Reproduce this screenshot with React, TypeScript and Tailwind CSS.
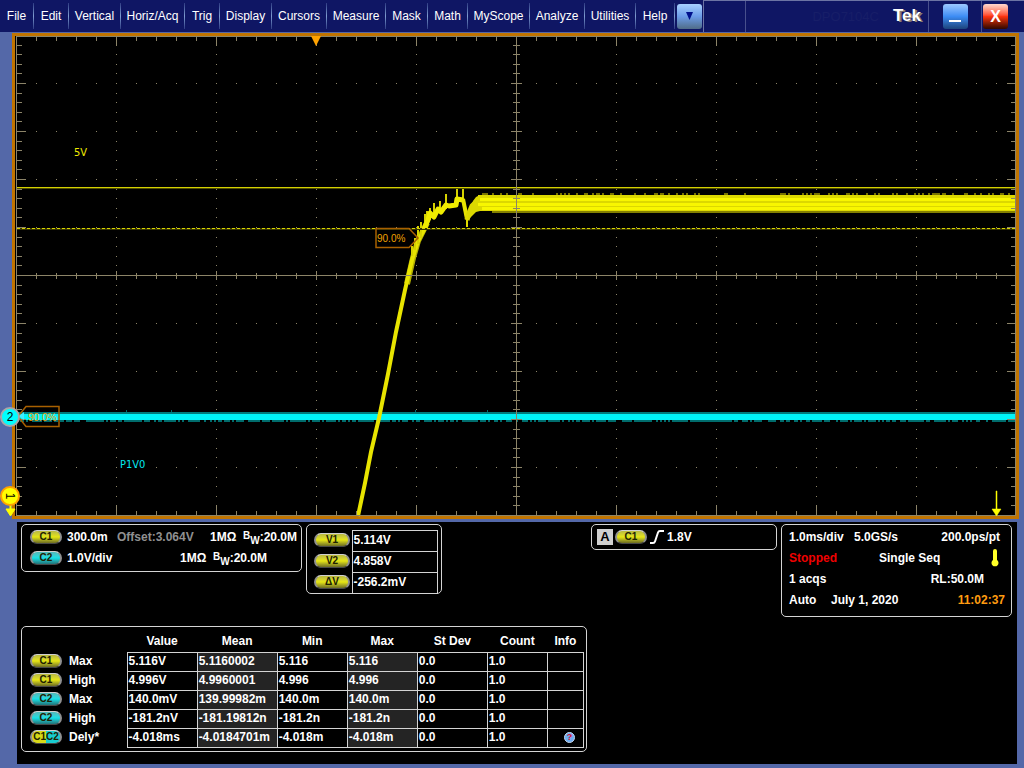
import React from 'react';

type Tone = 'c1' | 'c2' | 'both';

const menus = [
  { label: 'File', width: 'w-[33px]' },
  { label: 'Edit', width: 'w-[34px]' },
  { label: 'Vertical', width: 'w-[51px]' },
  { label: 'Horiz/Acq', width: 'w-[63px]' },
  { label: 'Trig', width: 'w-[34px]' },
  { label: 'Display', width: 'w-[51px]' },
  { label: 'Cursors', width: 'w-[54px]' },
  { label: 'Measure', width: 'w-[58px]' },
  { label: 'Mask', width: 'w-[41px]' },
  { label: 'Math', width: 'w-[39px]' },
  { label: 'MyScope', width: 'w-[61px]' },
  { label: 'Analyze', width: 'w-[54px]' },
  { label: 'Utilities', width: 'w-[50px]' },
  { label: 'Help', width: 'w-[38px]' },
];

const cursors = [
  { name: 'V1', value: '5.114V' },
  { name: 'V2', value: '4.858V' },
  { name: 'ΔV', value: '-256.2mV' },
];

const columns = ['Value', 'Mean', 'Min', 'Max', 'St Dev', 'Count', 'Info'];

const measurements: { source: string; tone: Tone; name: string; cells: string[] }[] = [
  { source: 'C1', tone: 'c1', name: 'Max', cells: ['5.116V', '5.1160002', '5.116', '5.116', '0.0', '1.0'] },
  { source: 'C1', tone: 'c1', name: 'High', cells: ['4.996V', '4.9960001', '4.996', '4.996', '0.0', '1.0'] },
  { source: 'C2', tone: 'c2', name: 'Max', cells: ['140.0mV', '139.99982m', '140.0m', '140.0m', '0.0', '1.0'] },
  { source: 'C2', tone: 'c2', name: 'High', cells: ['-181.2nV', '-181.19812n', '-181.2n', '-181.2n', '0.0', '1.0'] },
  { source: 'C1C2', tone: 'both', name: 'Dely*', cells: ['-4.018ms', '-4.0184701m', '-4.018m', '-4.018m', '0.0', '1.0'] },
];

const toneClass: Record<Tone, string> = {
  c1: 'bg-linear-to-b from-[#b8b840] via-[#e6e610] to-[#6e6e20]',
  c2: 'bg-linear-to-b from-[#50b8b8] via-[#10e0e6] to-[#207478]',
  both: 'bg-linear-to-r from-[#d8d818] from-50% to-[#18ccd0] to-50%',
};

const Pill: React.FC<{ label: string; tone?: Tone; wide?: boolean }> = ({ label, tone = 'c1', wide }) => (
  <span
    className={`${toneClass[tone]} ${wide ? 'w-9' : 'w-8'} inline-flex h-[14px] shrink-0 items-center justify-center rounded-full border border-x-2 border-t-[#d0d0d0] border-x-[#909090] border-b-[#484848] text-[10px] leading-none font-bold text-[#202000]`}
  >
    {label}
  </span>
);

// Graticule: 10 x 10 divisions of 100 x 48 units, five minor steps each
const LEFT = 16;
const TOP = 36;
const xs = Array.from({ length: 49 }, (_, i) => ({ pos: LEFT + (i + 1) * 20, major: (i + 1) % 5 === 0 }));
const ys = Array.from({ length: 49 }, (_, i) => ({ pos: Math.round(TOP + (i + 1) * 9.6), major: (i + 1) % 5 === 0 }));

const ticks = [
  ...xs.map(({ pos, major }) => {
    const n = major ? 10 : 5;
    return `M${pos} 36h1v${n}h-1zM${pos} ${516 - n}h1v${n}h-1zM${pos} ${major ? 271 : 273}h1v${major ? 9 : 6}h-1z`;
  }),
  ...ys.map(({ pos, major }) => {
    const n = major ? 9 : 5;
    return `M17 ${pos - 1}h${n}v1h-${n}zM${1016 - n} ${pos - 1}h${n}v1h-${n}zM${major ? 511 : 513} ${pos - 1}h${major ? 11 : 7}v1h-${major ? 11 : 7}z`;
  }),
].join('');

const dots = [
  ...xs.flatMap(x => ys.filter(y => y.major).map(y => `M${x.pos} ${y.pos - 1}h1v1h-1z`)),
  ...ys.flatMap(y => xs.filter(x => x.major).map(x => `M${x.pos} ${y.pos - 1}h1v1h-1z`)),
].join('');

// Sparse specks along the edge of a trace
const specks = (from: number, y: number, seed: number, density: number) => {
  let s = seed;
  let d = '';
  for (let x = from; x < 1015; x += 2) {
    s = (s * 16807) % 2147483647;
    if (s % 100 < density) d += `M${x} ${y}h2v2h-2z`;
  }
  return d;
};

const Graticule: React.FC = () => (
  <svg
    viewBox="15 36 1001 480"
    className="block h-auto w-full overflow-visible font-['Liberation_Sans',Arial,sans-serif]"
    role="img"
    aria-label="Waveform display"
  >
    <rect x="15" y="36" width="1001" height="480" fill="#000" />
    <path d={dots} fill="#8c8468" />

    {/* Channel 2 */}
    <rect x="17" y="412" width="999" height="3" fill="#007c7c" />
    <path d={specks(20, 420, 77, 72)} fill="#006c6c" />
    <path d="M126 410h1v2h-1zM171 410h1v2h-1zM415 410h1v2h-1zM487 410h1v2h-1z" fill="#006c6c" />
    <rect x="17" y="414" width="999" height="6" fill="#00f4f8" />

    {/* Channel 1 */}
    <path d="M407 284 L413 258 L418 241 L427 223" fill="none" stroke="#b4b000" strokeWidth="6" />
    <path d="M358 516 L365 483 L371 452 L379 418 L388 374 L396 332 L405 290 L412 260 L418 241 L426 226" fill="none" stroke="#e8e400" strokeWidth="4" />
    <path d="M412 256V246 M415 250V238 M418 244V226 M421 238V222 M425 230V214 M427 226V211 M430 220V208 M434 214V203 M440 212V201 M446 209V194 M457 205V188 M463 203V189" stroke="#d6d200" strokeWidth="2" />
    <path d="M424 229 L428 220 L430 213 L434 217 L438 209 L441 212 L446 205 L449 206 L456 205 L457 199 L463 200" fill="none" stroke="#f0ec00" strokeWidth="5" strokeLinejoin="round" />
    <path d="M463 199 L467 219" fill="none" stroke="#e8e400" strokeWidth="4" />
    <path d="M467 220 L469 213 L472 206 L476 202 L480 201" fill="none" stroke="#dcd800" strokeWidth="5" />
    <path d="M473 201 L476 197 L480 195 V211 L476 212 L472 216 L469 219z" fill="#dcd800" />
    <path d="M467 214V227" stroke="#e0dc00" strokeWidth="2" />
    <path d={specks(478, 193, 19, 30)} fill="#787400" />
    <path d="M478 195H1016V211H478z" fill="#dcd800" />
    <path d="M480 198h536v3h-536zM478 203h538v3h-538zM482 207h534v3h-534z" fill="#f8f600" />
    <path d="M492 211h524v2h-524z" fill="#848000" />

    {/* Voltage cursors */}
    <path d="M17 188h999v1h-999z" fill="#504e00" />
    <path d="M17 187h999v1h-999z" fill="#d4d000" />
    <path d="M17 228h999v2h-999z" fill="#383600" />
    <path d="M17 228.500H1016" stroke="#d8d400" strokeDasharray="3 2" />

    <path d={ticks} fill="#8c8468" />
    <path d="M16 36h1v480h-1zM1015 36h1v480h-1zM16 36h1000v1h-1000zM16 515h1000v1h-1000z" fill="#8c8468" />
    <path d="M516 36h1v480h-1zM16 275h1000v1h-1000z" fill="#8c8468" />

    <path d="M311 36h10l-5 10z" fill="#ffa200" />
    <path d="M996 491h1v18h4l-4.500 7-4.500-7h4z" fill="#ff0" stroke="#ff0" strokeWidth=".5" />

    {/* Reference level tags */}
    <g fill="none" stroke="#a86000" strokeWidth="1.500">
      <path d="M376 228.500H409L418 238L409 247.500H376z" />
      <path d="M59 406.500H26L18 416.500L26 426.500H59z" />
    </g>
    <path d="M19 416l5-4v8z" fill="#4ef" />
    <g fill="#f0a000" fontSize="10">
      <text x="377" y="242">90.0%</text>
      <text x="28" y="421">90.0%</text>
    </g>

    <g fontSize="11" fontFamily="DejaVu Sans Condensed, sans-serif">
      <text x="74" y="156" fill="#f0ec00">5V</text>
      <text x="120" y="468" fill="#00e8f0">P1V0</text>
    </g>

    {/* Channel handles */}
    <circle cx="10" cy="417" r="9" fill="#0ff" stroke="#a8a8a8" strokeWidth="2" />
    <text x="10" y="421" fontSize="12" textAnchor="middle" fill="#000">2</text>
    <path d="M10 505h1v4h4l-4.500 7-4.500-7h4z" fill="#ff0" stroke="#ff0" />
    <circle cx="10" cy="496" r="9" fill="#ff0" stroke="#ffa200" strokeWidth="2" />
    <text x="10" y="500" fontSize="12" textAnchor="middle" fill="#000" transform="rotate(90 10 496)">1</text>
  </svg>
);

const Bandwidth: React.FC = () => (
  <span>
    1MΩ&nbsp; <span className="relative bottom-[2px] text-[10px]">B</span>
    <span className="relative top-[3px] text-[10px]">W</span>:20.0M
  </span>
);

const Divider: React.FC = () => (
  <span className="h-[26px] w-px shrink-0 bg-linear-to-b from-[#303c84] via-[#7f9cd0] to-[#303c84]" />
);

const panel = 'shrink-0 rounded-[5px] border border-[#d4d4d4]';

const App: React.FC = () => {
  return (
    <div className="flex min-h-screen flex-col bg-[#5468a8] font-['Liberation_Sans',Arial,sans-serif] text-xs text-white">
      <header className="flex h-8 items-center bg-[#0f1664]">
        <nav className="flex items-center">
          {menus.map(m => (
            <React.Fragment key={m.label}>
              <button className={`${m.width} h-[26px] shrink-0 text-center whitespace-nowrap`}>{m.label}</button>
              <Divider />
            </React.Fragment>
          ))}
          <button
            aria-label="More menus"
            className="mr-px ml-[2px] flex h-[25px] w-[25px] items-center justify-center rounded-[3px] bg-linear-to-b from-[#a8d0ff] via-[#6c9ce8] to-[#506c88]"
          >
            <svg width="7" height="8" viewBox="0 0 7 8"><path d="M0 0h7L3.500 8z" fill="#00108c" /></svg>
          </button>
        </nav>
        <div className="flex h-8 flex-1 items-center border-t border-l border-[#6c74a4] pr-4">
          <div className="h-full w-[42px] border-r border-[#48508c]" />
          <div className="flex h-full flex-1 items-center justify-end gap-[14px] border-r border-[#48508c] pr-[7px]">
            <span className="text-[13px] text-[#171e68]">DPO7104C</span>
            <span className="text-[17px] font-bold [text-shadow:2px_1px_0_#887c70]">Tek</span>
          </div>
          <div className="flex h-full w-[53px] items-center justify-center border-r border-[#48508c]">
            <button
              aria-label="Minimize"
              className="flex h-[25px] w-[25px] items-end justify-center rounded-[3px] bg-linear-to-b from-[#9cc8ff] via-[#3c8cf4] to-[#1c447c] pb-[7px]"
            >
              <span className="h-[2px] w-3 bg-white" />
            </button>
          </div>
          <button
            aria-label="Close"
            className="ml-px flex h-[25px] w-[25px] items-center justify-center rounded-[3px] bg-linear-to-b from-[#ffd8d0] via-[#fc3410] to-[#300800] text-base font-bold"
          >
            X
          </button>
        </div>
      </header>

      <section className="mt-px mr-[5px] ml-3 border-[3px] border-[#c07400]">
        <Graticule />
      </section>

      <main className="mt-[3px] mr-[7px] mb-1 ml-[17px] flex-1 bg-black pt-[2px] pr-[5px] pb-3 pl-1 font-bold">
        <div className="flex items-start gap-1">
          <section className={`${panel} w-[281px] pt-px pr-1 pb-[3px] pl-2`}>
            <div className="flex h-[21px] items-center">
              <Pill label="C1" />
              <span className="ml-[5px] w-[50px]">300.0m</span>
              <span className="text-[#909090]">Offset:3.064V</span>
              <span className="ml-auto"><Bandwidth /></span>
            </div>
            <div className="flex h-[21px] items-center pr-[30px]">
              <Pill label="C2" tone="c2" />
              <span className="ml-[5px]">1.0V/div</span>
              <span className="ml-auto"><Bandwidth /></span>
            </div>
          </section>

          <section className={`${panel} h-[70px] w-[136px] pt-[5px] pl-[7px]`}>
            <table className="w-[124px] table-fixed border-collapse">
              <tbody>
                {cursors.map(c => (
                  <tr key={c.name} className="h-[21px]">
                    <th scope="row" className="w-[38px] p-0 pb-[2px] text-left align-middle">
                      <span className="flex"><Pill label={c.name} wide /></span>
                    </th>
                    <td className="border border-b-0 border-[#d4d4d4] p-0 pb-[3px] pl-px leading-4">{c.value}</td>
                  </tr>
                ))}
              </tbody>
            </table>
          </section>

          <section className={`${panel} ml-auto flex h-[26px] w-[186px] items-center pl-[5px]`}>
            <span className="mr-[2px] flex h-4 w-4 items-center justify-center bg-[#d0d0d0] text-[13px] text-black">A</span>
            <Pill label="C1" />
            <svg width="16" height="14" viewBox="0 0 16 14" className="mx-[2px]">
              <path d="M1 13h3q1.500 0 2-1.500L9 2.500Q9.500 1 11 1h4" fill="none" stroke="#fff" strokeWidth="2" />
            </svg>
            <span>1.8V</span>
          </section>

          <section className={`${panel} flex h-[93px] w-[231px] flex-col pt-px pr-[6px] pl-[7px]`}>
            <div className="flex h-[21px] items-center pr-[5px]">
              <span className="w-[65px]">1.0ms/div</span>
              <span>5.0GS/s</span>
              <span className="ml-auto">200.0ps/pt</span>
            </div>
            <div className="flex h-[21px] items-center pr-[6px]">
              <span className="w-[90px] text-[#f00000]">Stopped</span>
              <span>Single Seq</span>
              <svg width="8" height="18" viewBox="0 0 8 18" className="ml-auto">
                <path d="M2 2a2 2 0 0 1 4 0v9a3.500 3.500 0 1 1-4 0z" fill="#ffff28" />
              </svg>
            </div>
            <div className="flex h-[21px] items-center justify-between pr-[21px]">
              <span>1 acqs</span>
              <span>RL:50.0M</span>
            </div>
            <div className="flex h-[21px] items-center">
              <span className="w-[42px]">Auto</span>
              <span>July 1, 2020</span>
              <span className="ml-auto text-[#ff9c10]">11:02:37</span>
            </div>
          </section>
        </div>

        <section className={`${panel} mt-[9px] w-[566px] pb-[3px]`}>
          <table className="w-[562px] table-fixed border-collapse">
            <colgroup>
              <col className="w-[47px]" />
              <col className="w-[58px]" />
              <col className="w-[70px]" />
              <col className="w-[80px]" />
              <col className="w-[70px]" />
              <col className="w-[70px]" />
              <col className="w-[70px]" />
              <col className="w-[60px]" />
              <col className="w-[36px]" />
            </colgroup>
            <thead>
              <tr className="h-[25px]">
                <td colSpan={2} />
                {columns.map(c => (
                  <th key={c} scope="col" className="p-0 pt-[3px] text-center">{c}</th>
                ))}
              </tr>
            </thead>
            <tbody>
              {measurements.map(m => (
                <tr key={m.source + m.name} className="h-[19px]">
                  <td className="p-0 pb-[2px] pl-2 align-middle">
                    <span className="flex"><Pill label={m.source} tone={m.tone} /></span>
                  </td>
                  <th scope="row" className="p-0 pb-[2px] text-left leading-4">{m.name}</th>
                  {m.cells.map((v, i) => (
                    <td
                      key={columns[i]}
                      className={`${i === 1 || i === 3 ? 'bg-[#242424]' : ''} border border-[#d4d4d4] p-0 pb-[2px] pl-px leading-4`}
                    >
                      {v}
                    </td>
                  ))}
                  <td className="border border-[#d4d4d4] p-0">
                    {m.tone === 'both' && (
                      <button
                        aria-label="Measurement info"
                        className="ml-4 flex h-[11px] w-[11px] items-center justify-center rounded-full border border-[#c8d8f0] bg-[#6cacf0] text-[9px] leading-none text-[#e01030]"
                      >
                        ?
                      </button>
                    )}
                  </td>
                </tr>
              ))}
            </tbody>
          </table>
        </section>
      </main>
    </div>
  );
};

export default App;
